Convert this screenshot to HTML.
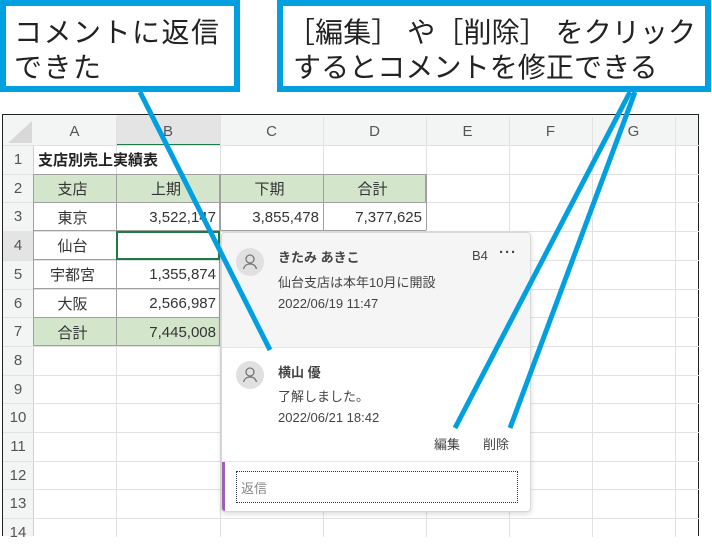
<!DOCTYPE html>
<html><head><meta charset="utf-8"><style>
*{margin:0;padding:0;box-sizing:border-box}
body{width:712px;height:536px;background:#fff;position:relative;overflow:hidden;font-family:"Liberation Sans","Noto Sans CJK JP",sans-serif}
.abs{position:absolute}
.call{position:absolute;border:6px solid #00a0e0;background:#fff;color:#222;font-size:28px;line-height:35px;padding:9px 0 0 8px;white-space:nowrap}
.cell{position:absolute;font-size:15px;color:#333;display:flex;align-items:center}
.hl{position:absolute;height:1px;background:#e1e1e1}
.vl{position:absolute;width:1px;background:#e1e1e1}
</style></head><body>
<div class="call" style="left:0;top:0;width:240px;height:92px;letter-spacing:1.5px">コメントに返信<br>できた</div>
<div class="call" style="left:277px;top:0;width:434px;height:92px;padding-left:4px;letter-spacing:0.1px">［編集］ や［削除］ をクリック<br><span style="padding-left:6px">するとコメントを修正できる</span></div>

<div class="abs" style="left:2px;top:114px;width:697px;height:422px;border:1px solid #222;border-bottom:none;overflow:hidden">
<div class="abs" style="left:0;top:0;width:697px;height:31px;background:#f3f4f4;border-bottom:1px solid #d0d0d0"></div>
<div class="abs" style="left:0;top:31px;width:31px;height:400px;background:#f3f4f4;border-right:1px solid #d0d0d0"></div>
<div class="abs" style="left:114px;top:0;width:104px;height:31px;background:#e4e4e4;border-bottom:2px solid #1e7b45"></div>
<div class="abs" style="left:0;top:0;width:0;height:0;border-left:24px solid transparent;border-bottom:22px solid #d8d8d8;left:5px;top:6px"></div>
</div>
<div id="grid"></div>
<script>
var g=document.getElementById('grid'),h='';
var cols=[33,116,220,323,426,509,592,675,699];
var names=['A','B','C','D','E','F','G'];
for(var i=0;i<7;i++)h+='<div class="cell" style="left:'+cols[i]+'px;top:116px;width:'+(cols[i+1]-cols[i])+'px;height:30px;justify-content:center;color:#555;font-size:15px">'+names[i]+'</div>';
for(var i=1;i<cols.length-1;i++)h+='<div class="vl" style="left:'+cols[i]+'px;top:117px;height:420px"></div>';
for(var r=0;r<14;r++){var y=145+r*28.7;h+='<div class="hl" style="left:3px;top:'+y+'px;width:696px"></div>';
h+='<div class="cell" style="left:3px;top:'+y+'px;width:30px;height:29px;justify-content:center;color:#555;font-size:15px;background:'+(r==3?'#e4e4e4':'transparent')+'">'+(r+1)+'</div>';}
document.write(h);
</script>
<div class="cell" style="left:34px;top:146px;width:180px;height:27px;font-weight:bold;font-size:15px;padding-left:4px;color:#222">支店別売上実績表</div>
<div class="abs" style="left:33px;top:174px;width:393px;height:29px;background:#d3e6cb;border:1px solid #a0a0a0"></div>
<div class="abs" style="left:33px;top:317px;width:187px;height:29px;background:#d3e6cb;border:1px solid #a0a0a0"></div>
<div class="abs" style="left:33px;top:174px;width:187px;height:172px;border:1px solid #a0a0a0"></div>
<div class="abs" style="left:116px;top:174px;width:1px;height:172px;background:#a0a0a0"></div>
<div class="abs" style="left:220px;top:174px;width:1px;height:56px;background:#a0a0a0"></div>
<div class="abs" style="left:323px;top:174px;width:1px;height:56px;background:#a0a0a0"></div>
<div class="abs" style="left:33px;top:230px;width:393px;height:1px;background:#a0a0a0"></div>
<div class="abs" style="left:426px;top:174px;width:1px;height:56px;background:#a0a0a0"></div>
<div class="abs" style="left:33px;top:202px;width:393px;height:1px;background:#a0a0a0"></div>
<div class="abs" style="left:33px;top:259px;width:187px;height:1px;background:#a0a0a0"></div>
<div class="abs" style="left:33px;top:288px;width:187px;height:1px;background:#a0a0a0"></div>
<div class="abs" style="left:116px;top:231px;width:104px;height:29px;border:2px solid #1e7b45"></div>
<script>
var rows=[['支店','上期','下期','合計'],['東京','3,522,147','3,855,478','7,377,625'],['仙台','','',''],['宇都宮','1,355,874'],['大阪','2,566,987'],['合計','7,445,008']];
var cx=[33,116,220,323,426],s='';
rows.forEach(function(r,i){var y=174+i*28.7;r.forEach(function(t,j){var ctr=(i==0||j==0);s+='<div class="cell" style="left:'+cx[j]+'px;top:'+y+'px;width:'+(cx[j+1]-cx[j])+'px;height:29px;justify-content:'+(ctr?'center':'flex-end')+';padding-right:4px;color:#333">'+t+'</div>';});});
document.write(s);
</script>
<div class="abs" style="left:221px;top:232px;width:310px;height:280px;background:#fff;border:1px solid #d8d8d8;border-radius:4px;box-shadow:0 2px 6px rgba(0,0,0,.15);overflow:hidden;font-size:13px;color:#444">
<div class="abs" style="left:0;top:0;width:310px;height:115px;background:#f5f5f5;border-bottom:1px solid #e6e6e6"></div>
<div class="abs" style="left:14px;top:15px;width:28px;height:28px;border-radius:50%;background:#e0e0e0"><svg width="28" height="28" viewBox="0 0 28 28"><circle cx="14" cy="11" r="4" fill="none" stroke="#777" stroke-width="1.3"/><path d="M7.5 21c1-4 4-5 6.5-5s5.5 1 6.5 5" fill="none" stroke="#777" stroke-width="1.3"/></svg></div>
<div class="abs" style="left:56px;top:14px;font-weight:bold">きたみ あきこ</div>
<div class="abs" style="left:250px;top:15px">B4</div>
<div class="abs" style="left:277px;top:11px;font-size:15px;letter-spacing:1px;font-weight:bold">···</div>
<div class="abs" style="left:56px;top:39px">仙台支店は本年10月に開設</div>
<div class="abs" style="left:56px;top:63px">2022/06/19 11:47</div>
<div class="abs" style="left:14px;top:128px;width:28px;height:28px;border-radius:50%;background:#e0e0e0"><svg width="28" height="28" viewBox="0 0 28 28"><circle cx="14" cy="11" r="4" fill="none" stroke="#777" stroke-width="1.3"/><path d="M7.5 21c1-4 4-5 6.5-5s5.5 1 6.5 5" fill="none" stroke="#777" stroke-width="1.3"/></svg></div>
<div class="abs" style="left:56px;top:129px;font-weight:bold">横山 優</div>
<div class="abs" style="left:56px;top:153px">了解しました。</div>
<div class="abs" style="left:56px;top:177px">2022/06/21 18:42</div>
<div class="abs" style="left:212px;top:201px">編集</div>
<div class="abs" style="left:261px;top:201px">削除</div>
<div class="abs" style="left:0;top:228px;width:310px;height:1px;background:#e6e6e6"></div>
<div class="abs" style="left:0;top:229px;width:3px;height:51px;background:#a060b0"></div>
<div class="abs" style="left:14px;top:238px;width:282px;height:32px;border:1px dotted #333;padding:6px 4px;color:#888">返信</div>
</div>
<svg class="abs" style="left:0;top:0" width="712" height="536"><g stroke="#00a0e0" stroke-width="5" stroke-linecap="butt"><line x1="140" y1="92" x2="270" y2="350"/><line x1="630" y1="92" x2="455" y2="428"/><line x1="635" y1="92" x2="510" y2="428"/></g></svg>
</body></html>
